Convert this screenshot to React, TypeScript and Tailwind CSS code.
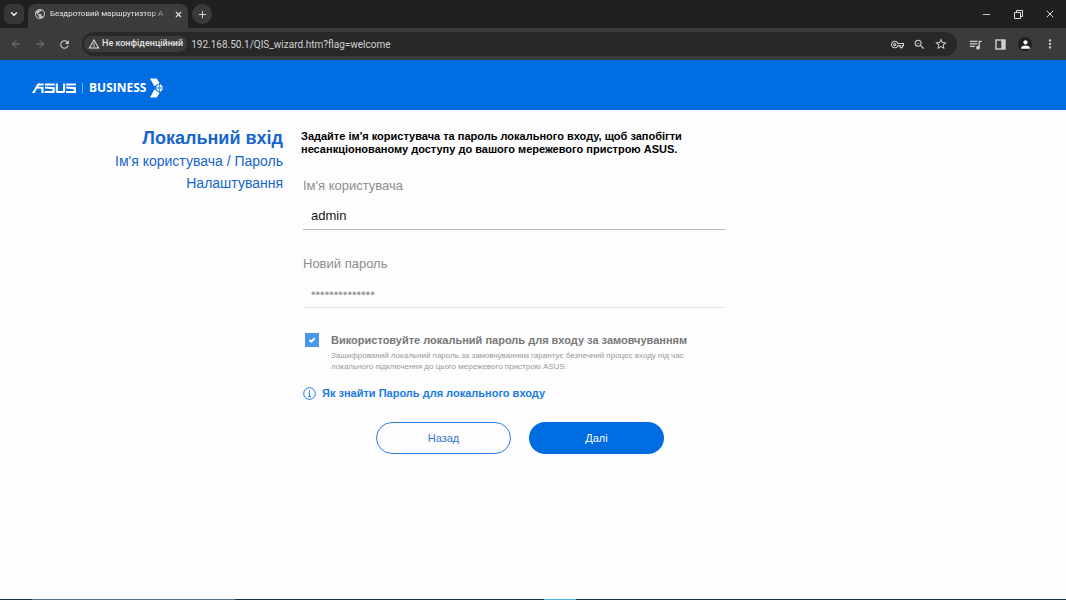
import { useState } from "react";
import type { ReactNode } from "react";
import { ChevronDown, X, Plus, ArrowLeft, ArrowRight, Minus } from "lucide-react";
import { MdRefresh, MdOutlineVpnKey, MdZoomOut, MdStarBorder, MdQueueMusic, MdWarningAmber, MdMoreVert, MdPerson, MdPublic } from "react-icons/md";

function IconButton({ label, className = "", children }: { label: string; className?: string; children: ReactNode }) {
  return (
    <button type="button" aria-label={label} className={`flex shrink-0 items-center justify-center ${className}`}>
      {children}
    </button>
  );
}

function TabStrip() {
  return (
    <div className="flex h-7 items-end bg-[#1f2020]">
      <div className="flex h-7 items-center pl-1">
        <IconButton label="Пошук вкладок" className="size-5 rounded-md bg-[#373737] text-white">
          <ChevronDown size={10} strokeWidth={3} />
        </IconButton>
      </div>
      <div className="ml-1 flex h-6 w-40 items-center rounded-t-lg bg-[#3c3c3c] px-1 pb-1 text-[#e3e3e3]">
        <MdPublic size={12} className="ml-0.5 shrink-0 text-[#b9bec4]" />
        <span className="ml-1 text-[8px] whitespace-nowrap [mask-image:linear-gradient(to_right,black_88%,transparent_110%)]">
          Бездротовий маршрутизтор A
        </span>
        <IconButton label="Закрити вкладку" className="ml-auto size-3">
          <X size={9} strokeWidth={3} />
        </IconButton>
      </div>
      <div className="ml-1 flex h-7 items-center">
        <IconButton label="Нова вкладка" className="size-5 rounded-full bg-[#3a3a3a] text-[#dedede]">
          <Plus size={11} strokeWidth={2} />
        </IconButton>
      </div>
      <div className="ml-auto flex h-7 items-center gap-3 pr-1.5 text-[#dddddd]">
        <IconButton label="Згорнути" className="size-5">
          <Minus size={11} strokeWidth={2} />
        </IconButton>
        <IconButton label="Відновити" className="size-5">
          <svg width="9" height="9" viewBox="0 0 9 9" fill="none" stroke="currentColor" strokeWidth="1">
            <path d="M.5 2.5h6v6h-6zM2.5 2.5v-2h6v6h-2" />
          </svg>
        </IconButton>
        <IconButton label="Закрити" className="size-5">
          <X size={12} strokeWidth={2} />
        </IconButton>
      </div>
    </div>
  );
}

function Toolbar() {
  return (
    <div className="flex h-8 items-center bg-[#3b3b3b] text-[#d0d0d0]">
      <div className="flex items-center gap-1 pl-1.5">
        <IconButton label="Назад" className="size-5 text-[#7b7b7b]">
          <ArrowLeft size={12} strokeWidth={2} />
        </IconButton>
        <IconButton label="Вперед" className="size-5 text-[#7b7b7b]">
          <ArrowRight size={12} strokeWidth={2} />
        </IconButton>
        <IconButton label="Оновити" className="size-5">
          <MdRefresh size={13} />
        </IconButton>
      </div>
      <div className="ml-2 flex h-6 min-w-0 flex-1 items-center rounded-full bg-[#282828] pr-1.5 pl-0.5">
        <button type="button" className="flex h-4 shrink-0 items-center gap-0.5 rounded-full bg-[#3b3b3b] px-1 text-[9px] font-medium text-[#e3e3e3]">
          <MdWarningAmber size={12} />
          Не конфіденційний
        </button>
        <input
          aria-label="Адреса"
          defaultValue="192.168.50.1/QIS_wizard.htm?flag=welcome"
          className="ml-1 min-w-0 flex-1 bg-transparent text-[10px] text-[#d2d2d2] outline-none"
        />
        <div className="flex items-center gap-0.5">
          <IconButton label="Паролі" className="size-5">
            <MdOutlineVpnKey size={13} />
          </IconButton>
          <IconButton label="Масштаб" className="size-5">
            <MdZoomOut size={13} />
          </IconButton>
          <IconButton label="Закладка" className="size-5">
            <MdStarBorder size={14} />
          </IconButton>
        </div>
      </div>
      <div className="flex items-center gap-[5px] pr-1.5 pl-2">
        <IconButton label="Медіа" className="size-5">
          <MdQueueMusic size={15} />
        </IconButton>
        <IconButton label="Бічна панель" className="size-5">
          <svg width="11" height="11" viewBox="0 0 11 11">
            <rect x="1" y="1" width="9" height="9" fill="none" stroke="currentColor" strokeWidth="1.4" />
            <path d="M6.3 1H10v9H6.3z" fill="currentColor" />
          </svg>
        </IconButton>
        <IconButton label="Профіль" className="size-5">
          <span className="flex size-3.5 items-center justify-center rounded-full bg-[#1f1f1f] text-white">
            <MdPerson size={13} />
          </span>
        </IconButton>
        <IconButton label="Меню" className="size-5">
          <MdMoreVert size={14} />
        </IconButton>
      </div>
    </div>
  );
}

function AsusMark() {
  return (
    <svg role="img" aria-label="ASUS" width="44" height="10" viewBox="0 0 45 10" preserveAspectRatio="none" fill="white">
      <path d="M0 10L5.8.6H8L2.6 10z" />
      <path d="M6.8.4H12v2H6zM5.5 3.6l6.3.5V10H9.6V5.8L4.5 5.4z" />
      <path d="M13.2.4h10v2h-10zM13.2 3.6l10 .7V10H12.8V8h8.2V6.2l-7.8-.6z" />
      <path d="M24.3.4h2.2V8h5.2V.4h2.2v8.2q0 1.4-1.4 1.4h-6.8q-1.4 0-1.4-1.4z" />
      <path d="M35 .4h10v2H35zM35 3.6l10 .7V10H34.8V8h8V6.2L35 5.6z" />
    </svg>
  );
}

function BusinessArrow() {
  return (
    <svg width="14" height="20" viewBox="0 0 14 20" fill="white" aria-hidden="true">
      <path d="M0 .5h6.6l3 4.6L4.4 8.2z" />
      <path d="M10.1 5.8l3.2 3.7H9.4zM8.9 6.1v3.4H5.4z" />
      <path d="M9.4 10.4h3.9l-3.2 3.8zM5.4 10.4h3.5v3.4z" />
      <path d="M4.4 11.6l5.2 3.3-3 4.6H0z" />
    </svg>
  );
}

function BrandBar() {
  return (
    <header className="flex h-[50px] items-center bg-[#006ce1] pt-1.5 pl-8 text-white">
      <AsusMark />
      <span className="ml-1.5 h-2.5 w-px bg-[#69a8ef]" />
      <span className="ml-1.5 font-['Open_Sans','Noto_Sans',sans-serif] text-xs font-bold">BUSINESS</span>
      <span className="ml-1">
        <BusinessArrow />
      </span>
    </header>
  );
}

function LoginForm() {
  const [useLocal, setUseLocal] = useState(true);
  return (
    <form className="w-[424px]" onSubmit={(e) => e.preventDefault()}>
      <p className="text-[11px] leading-[13px] font-bold text-black">
        Задайте ім'я користувача та пароль локального входу, щоб запобігти несанкціонованому доступу до вашого мережевого пристрою ASUS.
      </p>
      <div className="mt-[22px] ml-0.5 flex flex-col">
        <label htmlFor="username" className="text-[13px] leading-4 text-[#8d8d8d]">
          Ім'я користувача
        </label>
        <input
          id="username"
          defaultValue="admin"
          className="mt-2 h-7 border-b border-[#b4bcc3] px-2 text-[13px] text-[#181818] outline-none"
        />
      </div>
      <div className="mt-[26px] ml-0.5 flex flex-col">
        <label htmlFor="password" className="text-[13px] leading-4 text-[#8d8d8d]">
          Новий пароль
        </label>
        <input
          id="password"
          type="password"
          defaultValue="00000000000000"
          className="mt-2 h-7 border-b border-[#e0e3e6] px-2 text-[13px] text-[#a2a2a2] outline-none"
        />
      </div>
      <div className="mt-6 ml-1 flex items-start">
        <span className="relative mt-px flex size-3.5 shrink-0">
          <input
            id="local"
            type="checkbox"
            checked={useLocal}
            onChange={(e) => setUseLocal(e.target.checked)}
            className="peer size-3.5 appearance-none border border-[#4a97ec] checked:bg-[#4a97ec]"
          />
          <svg viewBox="0 0 14 14" className="pointer-events-none absolute inset-0 hidden peer-checked:block" fill="none" stroke="white" strokeWidth="1.8">
            <path d="M4.5 7l1.8 1.7 3.4-3.6" />
          </svg>
        </span>
        <div className="ml-3">
          <label htmlFor="local" className="block text-[11px] leading-4 font-bold text-[#777777]">
            Використовуйте локальний пароль для входу за замовчуванням
          </label>
          <p className="mt-0.5 text-[8px] leading-[11px] text-[#999999]">
            Зашифрований локальний пароль за замовчуванням гарантує безпечний процес входу під час
            <br />
            локального підключення до цього мережевого пристрою ASUS.
          </p>
        </div>
      </div>
      <a href="#help" className="mt-[13px] ml-0.5 flex items-center gap-1.5 text-[11px] leading-4 font-bold text-[#187be5]">
        <svg width="13" height="13" viewBox="0 0 13 13" fill="none" stroke="currentColor" aria-hidden="true">
          <circle cx="6.5" cy="6.5" r="5.8" />
          <path d="M6.5 3.2v1.4M5.4 5.8h1.2v3.4M5.2 9.4h2.7" />
        </svg>
        Як знайти Пароль для локального входу
      </a>
      <div className="mt-[21px] ml-[75px] flex gap-[18px]">
        <button type="button" className="h-8 w-[135px] rounded-full border border-[#2f7fe5] text-[11px] text-[#3478d4]">
          Назад
        </button>
        <button type="submit" className="h-8 w-[135px] rounded-full bg-[#006ce1] text-[11px] text-white">
          Далі
        </button>
      </div>
    </form>
  );
}

export default function App() {
  return (
    <div className="flex min-h-screen flex-col bg-[#fdfdfd]">
      <div className="font-[Roboto,'Noto_Sans',sans-serif]">
        <TabStrip />
        <Toolbar />
      </div>
      <BrandBar />
      <main className="flex flex-1 gap-[18px] pt-5 font-['Liberation_Sans',Arial,sans-serif]">
        <div className="w-[283px] shrink-0 text-right text-[#1665cb]">
          <h1 className="text-lg leading-4 font-bold">Локальний вхід</h1>
          <p className="mt-1 text-sm leading-[22px]">
            Ім'я користувача / Пароль
            <br />
            Налаштування
          </p>
        </div>
        <LoginForm />
      </main>
      <div className="flex h-px bg-[#12344e]">
        <div className="ml-[3%] w-[19%] bg-[#57728a]" />
        <div className="ml-[29%] w-[3%] bg-[#4db2ef]" />
      </div>
    </div>
  );
}
